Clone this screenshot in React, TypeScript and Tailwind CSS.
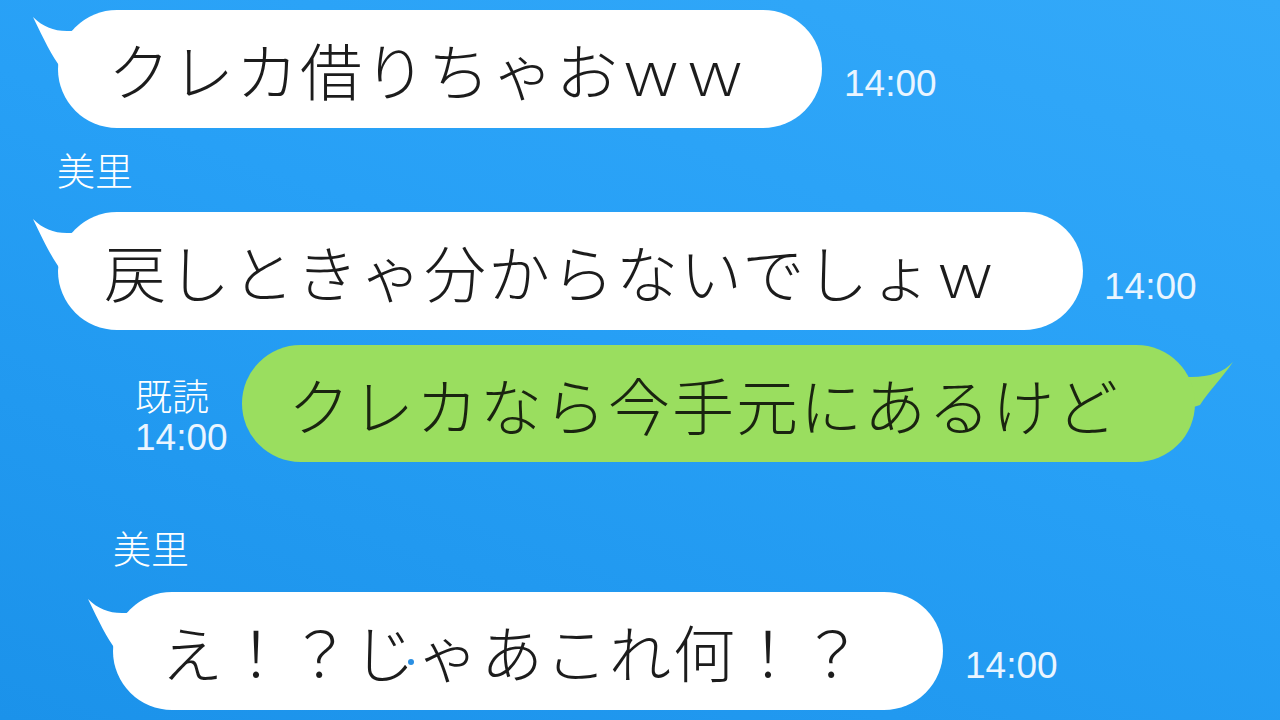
import React from "react";

const jp = { fontFamily: '"Noto Sans CJK JP", "Noto Sans", sans-serif' };
const num = { fontFamily: '"Liberation Sans", Arial, sans-serif' };

function LeftTail() {
  return (
    <svg className="absolute left-[-26px] top-0" width="60" height="70" viewBox="-26 0 60 70">
      <path d="M -25 7 C -12 20 4 24 26 19 L 26 62 L 3 58 C -6 46 -14 30 -25 7 Z" fill="#ffffff" />
    </svg>
  );
}

function RightTail() {
  return (
    <svg className="absolute right-[-40px] top-0" width="70" height="80" viewBox="-30 0 70 80">
      <path d="M 38 17 C 26 30 8 34 -20 31 L -20 68 L 5 60 C 14 46 26 34 38 17 Z" fill="#9ade5f" />
    </svg>
  );
}

function WhiteBubble({ width, children }: { width: number; children: React.ReactNode }) {
  return (
    <div className="relative shrink-0" style={{ width }}>
      <LeftTail />
      <div
        className="relative flex h-[118px] items-center rounded-full bg-white pl-[48px] text-[62px] font-light leading-none tracking-[2px] text-[#1c1c1c] whitespace-nowrap"
        style={jp}
      >
        {children}
      </div>
    </div>
  );
}

function Time({ className = "" }: { className?: string }) {
  return (
    <div className={`self-end text-[37px] leading-none text-[#eaf5ff] ${className}`} style={num}>
      14:00
    </div>
  );
}

export default function App() {
  return (
    <div className="relative h-[720px] w-[1280px] overflow-hidden bg-[linear-gradient(200deg,#33a9f9_0%,#27a0f6_45%,#1b92ea_100%)]">
      <div className="flex flex-col pt-[10px]">
        {/* Row 1 */}
        <div className="flex pl-[58px]">
          <WhiteBubble width={764}>
            <span className="pl-[2px]">クレカ借りちゃおｗｗ</span>
          </WhiteBubble>
          <Time className="mb-[26px] ml-[22px]" />
        </div>

        <div className="mt-[22px] pl-[57px] text-[38px] font-light leading-none text-white" style={jp}>
          美里
        </div>

        {/* Row 2 */}
        <div className="mt-[24px] flex pl-[58px]">
          <WhiteBubble width={1025}>
            <span className="-ml-[2px]">戻しときゃ分からないでしょｗ</span>
          </WhiteBubble>
          <Time className="mb-[25px] ml-[21px]" />
        </div>

        {/* Green row */}
        <div className="mt-[15px] flex pl-[135px]">
          <div className="flex w-[107px] flex-col gap-[5px] self-end pb-[6px] text-white">
            <div className="text-[37px] font-light leading-none" style={jp}>
              既読
            </div>
            <div className="text-[37px] leading-none text-[#eaf5ff]" style={num}>
              14:00
            </div>
          </div>
          <div className="relative w-[953px] shrink-0">
            <RightTail />
            <div
              className="relative flex h-[117px] items-center rounded-full bg-[#9ade5f] pl-[46px] text-[62px] font-light leading-none tracking-[2px] text-[#1a2410] whitespace-nowrap"
              style={jp}
            >
              クレカなら今手元にあるけど
            </div>
          </div>
        </div>

        <div className="mt-[66px] pl-[113px] text-[38px] font-light leading-none text-white" style={jp}>
          美里
        </div>

        {/* Row 4 */}
        <div className="mt-[26px] flex pl-[113px]">
          <WhiteBubble width={830}>
            <span>
              え！？
              <span className="relative">
                じ
                <span className="absolute bottom-[31px] right-[3px] h-[6px] w-[6px] rounded-full bg-[#2a8fe3]" />
              </span>
              ゃあこれ何！？
            </span>
          </WhiteBubble>
          <Time className="mb-[26px] ml-[22px]" />
        </div>
      </div>
    </div>
  );
}
